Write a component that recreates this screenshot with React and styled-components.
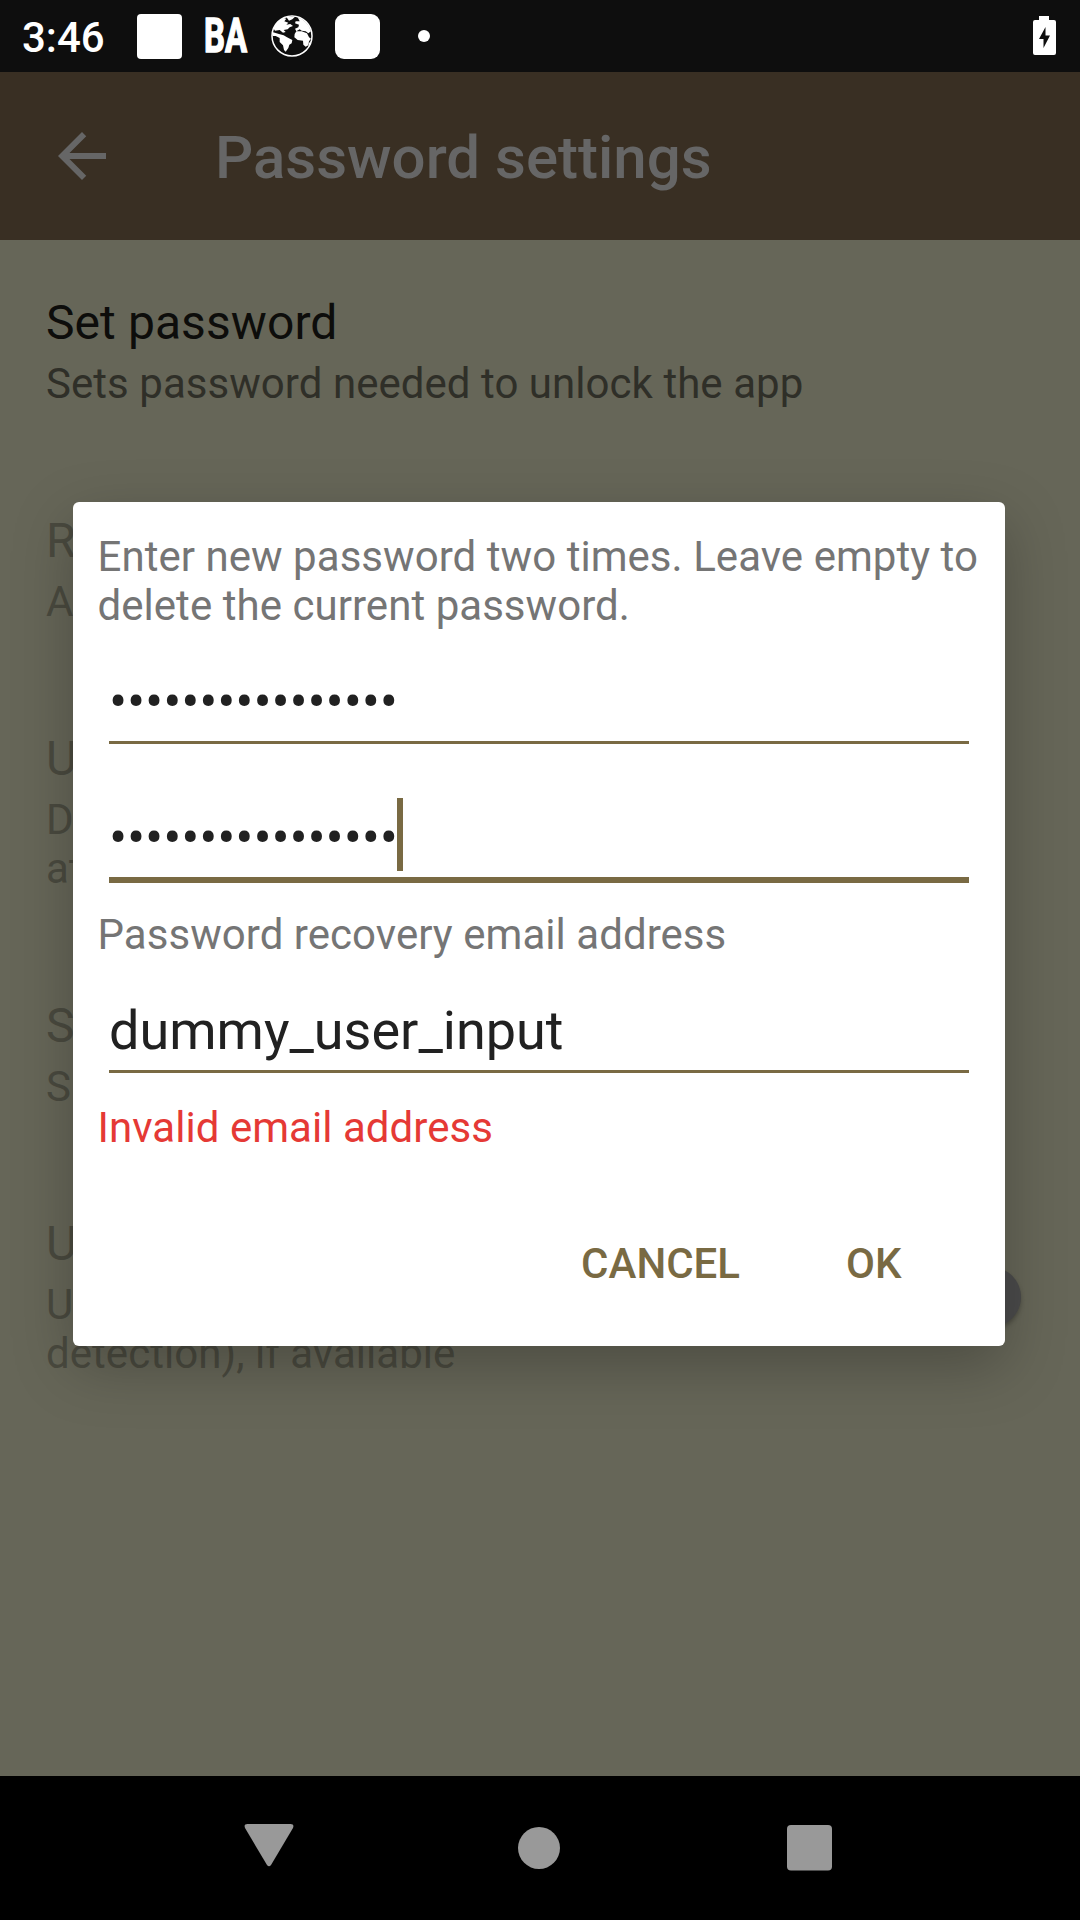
import React from "react";
import styled, { createGlobalStyle } from "styled-components";
import { MdArrowBack } from "react-icons/md";

const GlobalStyle = createGlobalStyle`
  * { box-sizing: border-box; }
  body { margin: 0; background: #000; font-family: Roboto, "Liberation Sans", sans-serif; }
`;

const Screen = styled.div`
  position: relative;
  display: flex;
  flex-direction: column;
  width: 1080px;
  height: 1920px;
  overflow: hidden;
  background: #666658;
`;

const StatusBar = styled.header`
  display: flex;
  align-items: center;
  height: 72px;
  padding: 0 24px 0 22px;
  background: #0e0e0e;
  color: #fff;
`;

const Clock = styled.span`
  width: 115px;
  font-size: 42px;
  line-height: 49px;
  font-weight: 500;
  padding-top: 3px;
`;

const AppBlock = styled.span`
  width: 45px;
  height: 45px;
  border-radius: ${(p) => p.$radius}px;
  background: #fff;
`;

const AppMonogram = styled.span`
  width: 44px;
  margin: 0 22px 0 22px;
  font-size: 49px;
  line-height: 58px;
  font-weight: 700;
  white-space: nowrap;

  span {
    display: inline-block;
    transform: scaleX(0.67);
    transform-origin: 0 50%;
    -webkit-text-stroke: 1.5px #fff;
  }
`;

const WorldIcon = styled.svg`
  width: 44px;
  height: 44px;
  margin-right: 21px;
`;

const MoreDot = styled.span`
  width: 12px;
  height: 12px;
  margin-left: 38px;
  border-radius: 50%;
  background: #fff;
`;

const Battery = styled.svg`
  width: 24px;
  height: 40px;
  margin: 0 0 2px auto;
`;

const Toolbar = styled.div`
  display: flex;
  align-items: center;
  height: 168px;
  padding-left: 46px;
  background: #392f23;
  color: #666;
`;

const BackIcon = styled(MdArrowBack)`
  width: 72px;
  height: 72px;
`;

const Title = styled.h1`
  margin: 4px 0 0 97px;
  font-size: 60px;
  line-height: 70px;
  font-weight: 500;
`;

const Settings = styled.main`
  flex: 1;
  display: flex;
  flex-direction: column;
`;

const SettingRow = styled.section`
  display: flex;
  align-items: center;
  justify-content: space-between;
  padding: 55px 59px 50px 46px;
  color: ${(p) => (p.$disabled ? "#4a4a3f" : "#2f2f28")};
`;

const SettingName = styled.div`
  margin-bottom: 8px;
  font-size: 48px;
  line-height: 56px;
  letter-spacing: 0.08px;
  color: ${(p) => (p.$disabled ? "#4a4a3f" : "#0d0d0b")};
`;

const SettingNote = styled.div`
  font-size: 42px;
  line-height: 49px;
  letter-spacing: 0.045px;
  white-space: pre-line;
`;

const SwitchTrack = styled.span`
  display: flex;
  align-items: center;
  justify-content: flex-end;
  width: 102px;
  height: 42px;
  border-radius: 21px;
  background: #57574b;
`;

const SwitchThumb = styled.span`
  width: 60px;
  height: 60px;
  flex: none;
  border-radius: 50%;
  background: #4b4b4b;
  box-shadow: 0 3px 4px rgba(0, 0, 0, 0.25);
`;

const NavBar = styled.nav`
  display: flex;
  align-items: center;
  justify-content: space-between;
  height: 144px;
  padding: 0 234px;
  background: #000;
`;

const NavIcon = styled.svg`
  width: 72px;
  height: 72px;
  fill: #999;
`;

const Overlay = styled.div`
  position: absolute;
  inset: 72px 0 144px;
  display: flex;
  align-items: center;
  justify-content: center;
`;

const Dialog = styled.form`
  width: 932px;
  height: 844px;
  margin-right: 2px;
  padding: 30px 24px 0;
  border-radius: 6px;
  background: #fff;
  box-shadow: 0 20px 60px rgba(0, 0, 0, 0.25);
`;

const Message = styled.p`
  margin: 0 -4px 0 0.5px;
  font-size: 42px;
  line-height: 49px;
  letter-spacing: 0.045px;
  color: ${(p) => (p.$error ? "#e53935" : "#757575")};
`;

const Field = styled.div`
  display: flex;
  align-items: center;
  height: ${(p) => (p.$focused ? 77 : 74)}px;
  margin: ${(p) => p.$space};
  padding-bottom: 8px;
  border-bottom: ${(p) => (p.$focused ? 6 : 3)}px solid #796a43;
  color: #212121;
  font-size: 54px;
  line-height: 63px;
`;

const Mask = styled.span`
  letter-spacing: -0.17px;
`;

const Caret = styled.span`
  width: 6px;
  height: 73px;
  margin: -8px 0 -2px -1px;
  background: #796a43;
`;

const Actions = styled.div`
  display: flex;
  justify-content: flex-end;
  gap: 106px;
  margin-top: 87px;
  padding-right: 79.5px;
`;

const Action = styled.button`
  padding: 0;
  border: 0;
  background: none;
  color: #796a43;
  font: 500 42px/49px Roboto, "Liberation Sans", sans-serif;
`;

const settings = [
  { name: "Set password", note: "Sets password needed to unlock the app" },
  { name: "R", note: "A", disabled: true },
  { name: "U", note: "D\nat", disabled: true },
  { name: "S", note: "S", disabled: true },
  { name: "U", note: "U\ndetection), if available", disabled: true, toggle: true },
];

const mask = "•".repeat(16);

export default function App() {
  return (
    <Screen>
      <GlobalStyle />
      <StatusBar>
        <Clock>3:46</Clock>
        <AppBlock $radius={4} />
        <AppMonogram><span>BA</span></AppMonogram>
        <WorldIcon viewBox="17 14 132 132" fill="#fff">
          <circle cx="83" cy="80" r="60" fill="none" stroke="#fff" strokeWidth="4.500" />
          <path d="M28 58C32 44 43 32 58 26L66 28 60 36 72 40 66 46 78 44 86 50 76 54 70 60 58 62 64 68 56 70 46 62 32 64z" />
          <path d="M66 23L92 22 84 30 74 34z" />
          <path d="M24 68L44 74 58 78 68 84 84 92 82 102 75 106 72 116 64 127 59 122 56 108 46 98 46 86 34 80 25 80z" />
          <path d="M100 24C118 30 134 44 140 66L132 72 124 66 112 64 106 60 96 66 92 58 102 54 104 46 92 42 94 36 106 36z" />
          <path d="M96 66L112 66 128 72 134 84 140 88 134 96 132 108 124 112 117 106 116 94 100 92 90 84 91 74z" />
          <path d="M134 102l5-8-2 14-5 5z" />
        </WorldIcon>
        <AppBlock $radius={9} />
        <MoreDot />
        <Battery viewBox="0 0 24 40">
          <path fill="#fff" d="M7 1h10v4h5a2 2 0 0 1 2 2v31a2 2 0 0 1-2 2H3a2 2 0 0 1-2-2V7a2 2 0 0 1 2-2h4z" />
          <path fill="#0e0e0e" d="M13.500 12v8.500h4.500L11.500 33v-9H7z" />
        </Battery>
      </StatusBar>
      <Toolbar>
        <BackIcon />
        <Title>Password settings</Title>
      </Toolbar>
      <Settings>
        {settings.map((s, i) => (
          <SettingRow key={i} $disabled={s.disabled}>
            <div>
              <SettingName $disabled={s.disabled}>{s.name}</SettingName>
              <SettingNote>{s.note}</SettingNote>
            </div>
            {s.toggle && <SwitchTrack><SwitchThumb /></SwitchTrack>}
          </SettingRow>
        ))}
      </Settings>
      <NavBar>
        <NavIcon viewBox="0 0 72 72">
          <path d="M13.500 12h43q4 0 2.500 4L37 53q-2 2.500-4 0L11 16q-1.500-4 2.500-4z" />
        </NavIcon>
        <NavIcon viewBox="0 0 72 72"><circle cx="35" cy="36" r="21" /></NavIcon>
        <NavIcon viewBox="0 0 72 72"><rect x="13" y="13" width="45" height="45.500" rx="4" /></NavIcon>
      </NavBar>
      <Overlay>
        <Dialog>
          <Message>Enter new password two times. Leave empty to delete the current password.</Message>
          <Field $space="40px 12px 62px"><Mask>{mask}</Mask></Field>
          <Field $focused $space="0 12px 27px"><Mask>{mask}</Mask><Caret /></Field>
          <Message>Password recovery email address</Message>
          <Field $space="40px 12px 30px">dummy_user_input</Field>
          <Message $error>Invalid email address</Message>
          <Actions>
            <Action type="button">CANCEL</Action>
            <Action type="button">OK</Action>
          </Actions>
        </Dialog>
      </Overlay>
    </Screen>
  );
}
